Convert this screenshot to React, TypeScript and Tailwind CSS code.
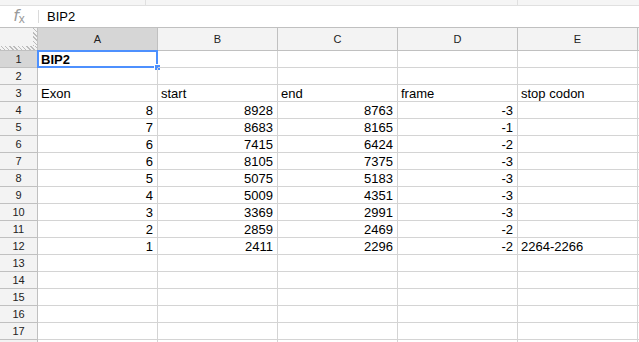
import React from 'react';

const COLS = ['A', 'B', 'C', 'D', 'E'];

type Cell = { v: string; right?: boolean; bold?: boolean };

const DATA: Record<number, Cell[]> = {
  1: [{ v: 'BIP2', bold: true }],
  3: [{ v: 'Exon' }, { v: 'start' }, { v: 'end' }, { v: 'frame' }, { v: 'stop codon' }],
};

const NUMS: [string, string, string, string, string?][] = [
  ['8', '8928', '8763', '-3'],
  ['7', '8683', '8165', '-1'],
  ['6', '7415', '6424', '-2'],
  ['6', '8105', '7375', '-3'],
  ['5', '5075', '5183', '-3'],
  ['4', '5009', '4351', '-3'],
  ['3', '3369', '2991', '-3'],
  ['2', '2859', '2469', '-2'],
  ['1', '2411', '2296', '-2', '2264-2266'],
];

NUMS.forEach((r, i) => {
  DATA[4 + i] = [
    { v: r[0], right: true },
    { v: r[1], right: true },
    { v: r[2], right: true },
    { v: r[3], right: true },
    { v: r[4] ?? '' },
  ];
});

const ROWS = Array.from({ length: 18 }, (_, i) => i + 1);

export default function App() {
  return (
    <div className="w-[639px] h-[342px] overflow-hidden bg-white font-['Liberation_Sans',Arial,sans-serif] text-black">
      {/* toolbar remnant */}
      <div className="h-[6px] flex bg-[#f5f5f5] border-b border-[#e0e0e0]">
        <div className="w-[146px] border-r border-[#e0e0e0]" />
        <div className="w-[372px] border-r border-[#e0e0e0]" />
      </div>

      {/* formula bar */}
      <div className="h-[22px] flex items-center border-b border-[#c0c0c0]">
        <div className="w-[38px] flex items-center justify-center">
          <span className="font-['DejaVu_Sans',sans-serif] italic text-[16px] text-[#9a9a9a] leading-none -mt-[1px]">
            f<span className="text-[12px] not-italic font-['Liberation_Sans',sans-serif] relative top-[2px]">x</span>
          </span>
        </div>
        <div className="w-px h-[13px] bg-[#dadada]" />
        <div className="pl-[8px] text-[13px]">BIP2</div>
      </div>

      {/* column headers */}
      <div className="flex h-[23px] bg-[#f3f3f3] border-b border-[#c0c0c0]">
        <div className="relative w-[38px] shrink-0 border-r border-[#c0c0c0]">
          <div className="absolute right-0 top-0 bottom-0 w-[4px] bg-[repeating-linear-gradient(45deg,#bbb_0_1px,#f3f3f3_1px_3px)]" />
          <div className="absolute left-0 right-0 bottom-0 h-[4px] bg-[repeating-linear-gradient(45deg,#bbb_0_1px,#f3f3f3_1px_3px)]" />
        </div>
        {COLS.map((c) => (
          <div
            key={c}
            className={`w-[120px] shrink-0 flex items-center justify-center text-[11px] text-[#222] border-r border-[#c0c0c0] ${
              c === 'A' ? 'bg-[#d6d6d6]' : ''
            }`}
          >
            {c}
          </div>
        ))}
        <div className="w-[10px] shrink-0" />
      </div>

      {/* rows */}
      {ROWS.map((r) => (
        <div key={r} className="flex h-[17px]">
          <div
            className={`w-[38px] shrink-0 flex items-center justify-center text-[11px] text-[#222] border-r border-b border-[#c0c0c0] ${
              r === 1 ? 'bg-[#d6d6d6]' : 'bg-[#f3f3f3]'
            }`}
          >
            {r < 18 ? r : ''}
          </div>
          {COLS.map((c, ci) => {
            const cell = DATA[r]?.[ci];
            const selected = r === 1 && ci === 0;
            return (
              <div
                key={c}
                className="relative w-[120px] shrink-0 border-r border-b border-[#d4d4d4] flex items-center text-[13px] leading-none"
              >
                {cell && (
                  <span
                    className={`w-full whitespace-nowrap ${cell.right ? 'text-right pr-[4px]' : 'pl-[3px]'} ${
                      cell.bold ? 'font-bold' : ''
                    }`}
                  >
                    {cell.v}
                  </span>
                )}
                {selected && (
                  <>
                    <div className="absolute -left-px -top-px -right-px -bottom-px border-2 border-[#4d90fe]" />
                    <div className="absolute -right-[4px] -bottom-[4px] w-[7px] h-[7px] bg-[#4d90fe] border border-white" />
                  </>
                )}
              </div>
            );
          })}
          <div className="w-[10px] shrink-0 border-b border-[#d4d4d4]" />
        </div>
      ))}
    </div>
  );
}
